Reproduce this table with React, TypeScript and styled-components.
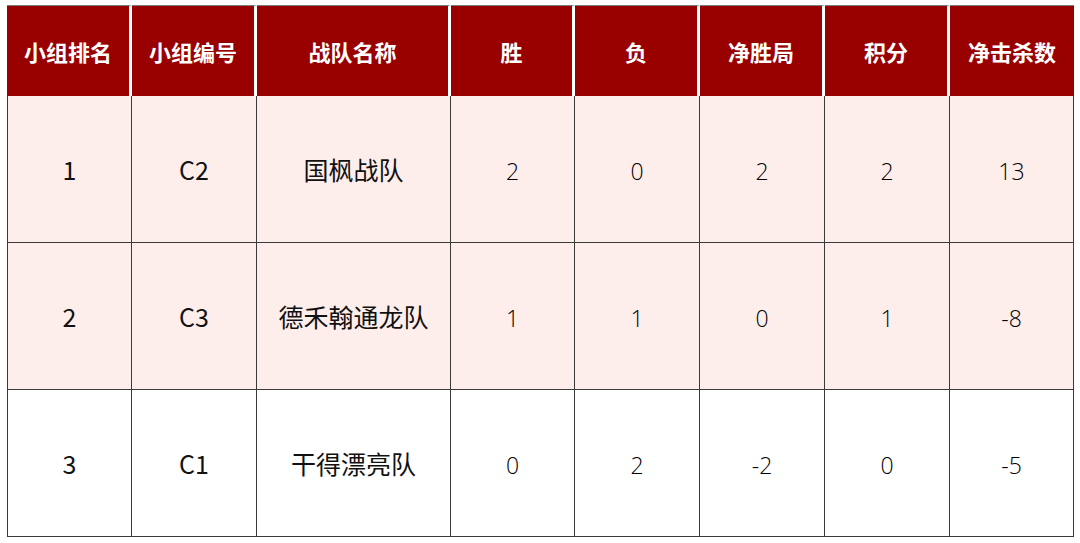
import React from 'react'
import styled, { createGlobalStyle } from 'styled-components'

const GlobalStyle = createGlobalStyle`
  html, body {
    margin: 0;
    padding: 0;
    background: #ffffff;
  }
  body {
    font-family: 'Noto Sans CJK SC', 'Noto Sans', sans-serif;
  }
`

const Page = styled.div`
  width: 1080px;
  height: 543px;
  padding: 5px 0 0 7px;
  box-sizing: border-box;
`

const Table = styled.table`
  border-collapse: separate;
  border-spacing: 0;
  table-layout: fixed;
  width: 1067px;
`

const Th = styled.th<{ $last?: boolean }>`
  height: 91px;
  padding: 0;
  background: #990000;
  color: #ffffff;
  font-size: 22px;
  font-weight: 700;
  text-align: center;
  vertical-align: middle;
  border-top: 1px solid #7a7a7a;
  border-right: ${(p) => (p.$last ? '0' : '3px solid #ffffff')};
  box-sizing: border-box;
`

const Tr = styled.tr<{ $tint: boolean }>`
  background: ${(p) => (p.$tint ? '#fdeeec' : '#ffffff')};
`

const Td = styled.td<{ $first?: boolean; $light?: boolean }>`
  height: 147px;
  padding: ${(p) => (p.$light ? '4px 0 0' : '0')};
  box-sizing: border-box;
  text-align: center;
  vertical-align: middle;
  color: ${(p) => (p.$light ? '#000000' : '#111111')};
  font-family: ${(p) =>
    p.$light
      ? "'Open Sans', 'Noto Sans CJK SC', sans-serif"
      : "'Noto Sans CJK SC', 'Noto Sans', sans-serif"};
  font-size: ${(p) => (p.$light ? '23px' : '25px')};
  font-weight: ${(p) => (p.$light ? 300 : 400)};
  border-right: 1px solid #3a3a3a;
  border-bottom: 1px solid #3a3a3a;
  border-left: ${(p) => (p.$first ? '1px solid #3a3a3a' : '0')};
`

const widths = [125, 125, 194, 124, 125, 125, 125, 124]

const heads = ['小组排名', '小组编号', '战队名称', '胜', '负', '净胜局', '积分', '净击杀数']

const rows = [
  ['1', 'C2', '国枫战队', '2', '0', '2', '2', '13'],
  ['2', 'C3', '德禾翰通龙队', '1', '1', '0', '1', '-8'],
  ['3', 'C1', '干得漂亮队', '0', '2', '-2', '0', '-5'],
]

export default function App() {
  return (
    <Page>
      <GlobalStyle />
      <Table>
        <colgroup>
          {widths.map((w, i) => (
            <col key={i} style={{ width: w }} />
          ))}
        </colgroup>
        <thead>
          <tr>
            {heads.map((h, i) => (
              <Th key={h} $last={i === heads.length - 1}>
                {h}
              </Th>
            ))}
          </tr>
        </thead>
        <tbody>
          {rows.map((r, ri) => (
            <Tr key={ri} $tint={ri < 2}>
              {r.map((c, ci) => (
                <Td key={ci} $first={ci === 0} $light={ci >= 3}>
                  {c}
                </Td>
              ))}
            </Tr>
          ))}
        </tbody>
      </Table>
    </Page>
  )
}
